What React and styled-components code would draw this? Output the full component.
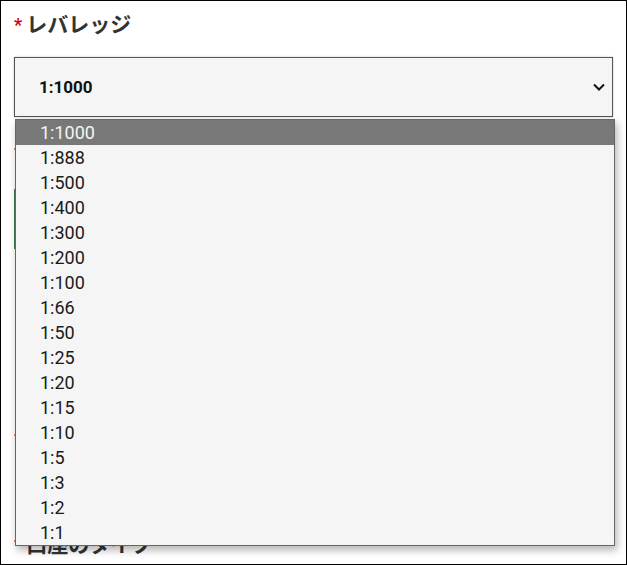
import React from "react"
import styled, { createGlobalStyle } from "styled-components"

const GlobalStyle = createGlobalStyle`
  body {
    margin: 0;
    background: #ffffff;
    font-family: Roboto, "Noto Sans CJK JP", sans-serif;
  }
`

const Frame = styled.div`
  width: 627px;
  height: 565px;
  box-sizing: border-box;
  border: 1px solid #000;
  padding: 8px 13px 0;
  position: relative;
  overflow: hidden;
  background: #fff;
  display: flex;
  flex-direction: column;
  gap: 20px;
`

const Field = styled.div`
  display: flex;
  flex-direction: column;
  gap: ${props => props.gap || 20}px;
`

const Label = styled.div`
  display: flex;
  align-items: center;
  gap: 4px;
  height: 28px;
  font-family: "Noto Sans CJK JP", sans-serif;
  font-size: 21px;
  font-weight: 700;
  color: #333;
  line-height: 28px;
`

const Required = styled.span`
  color: #d0021b;
  font-size: 18px;
  font-family: Roboto, sans-serif;
  position: relative;
  top: 2px;
`

const SelectBox = styled.div`
  height: 60px;
  box-sizing: border-box;
  border: 1px solid #555;
  background: #f5f5f5;
  display: flex;
  align-items: center;
  justify-content: space-between;
  padding: 0 6px 0 24px;
  font-family: Roboto, sans-serif;
  font-size: 17px;
  font-weight: 700;
  color: #111;
  box-shadow: 0 0 2px rgba(0, 0, 0, 0.25);
`

const InputBox = styled.div`
  height: ${props => props.h || 60}px;
  box-sizing: border-box;
  border: 1px solid ${props => props.color || "#3f7d52"};
  background: #fff;
`

const Dropdown = styled.ul`
  position: absolute;
  left: 14px;
  top: 118px;
  width: 600px;
  box-sizing: border-box;
  margin: 0;
  padding: 0;
  list-style: none;
  border: 1px solid #666;
  background: #f5f5f5;
  box-shadow: 2px 4px 8px rgba(0, 0, 0, 0.3);
`

const Option = styled.li`
  height: 25px;
  line-height: 25px;
  padding-left: 24px;
  font-family: Roboto, sans-serif;
  font-size: 18px;
  color: ${props => (props.active ? "#f4f4f4" : "#1a1a1a")};
  background: ${props => (props.active ? "#787878" : "transparent")};
`

const options = [
  "1:1000", "1:888", "1:500", "1:400", "1:300", "1:200", "1:100", "1:66",
  "1:50", "1:25", "1:20", "1:15", "1:10", "1:5", "1:3", "1:2", "1:1",
]

const Chevron = () => (
  <svg width="14" height="14" viewBox="0 0 14 14">
    <path d="M2 4.5 L7 9.5 L12 4.5" fill="none" stroke="#111" strokeWidth="2" />
  </svg>
)

const App = () => {
  return (
    <>
      <GlobalStyle />
      <Frame>
        <Field>
          <Label>
            <Required>*</Required>
            レバレッジ
          </Label>
          <SelectBox>
            <span>1:1000</span>
            <Chevron />
          </SelectBox>
        </Field>
        <Field gap={24}>
          <Label>
            <Required>*</Required>
            口座通貨
          </Label>
          <InputBox />
          <InputBox h={130} color="#ffffff" />
        </Field>
        <Field gap={78}>
          <Label>
            <Required>*</Required>
            ボーナス
          </Label>
          <Label>
            <Required>*</Required>
            口座のタイプ
          </Label>
        </Field>
        <Dropdown>
          {options.map((o, i) => (
            <Option key={o} active={i === 0}>
              {o}
            </Option>
          ))}
        </Dropdown>
      </Frame>
    </>
  )
}

export default App
